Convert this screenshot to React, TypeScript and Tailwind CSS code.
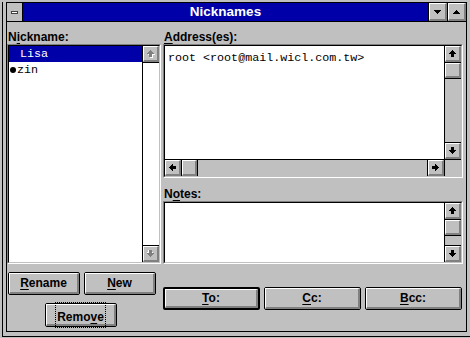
import React from "react";

const SANS = { fontFamily: '"Liberation Sans", Arial, sans-serif' };
const MONO = { fontFamily: '"Liberation Mono", "Courier New", monospace' };

type Dir = "up" | "down" | "left" | "right";

function StemArrow({ dir, disabled }: { dir: Dir; disabled?: boolean }) {
  const rects = [
    [3, 0, 1],
    [2, 1, 3],
    [1, 2, 5],
    [0, 3, 7],
    [2, 4, 3],
    [2, 5, 3],
    [2, 6, 3],
  ];
  const rot = dir === "up" ? 0 : dir === "down" ? 180 : dir === "left" ? 270 : 90;
  const draw = (fill: string, dx: number, dy: number) =>
    rects.map(([x, y, w], i) => (
      <rect key={fill + i} x={x + dx} y={y + dy} width={w} height={1} fill={fill} />
    ));
  return (
    <svg width="8" height="8" viewBox="0 0 8 8" shapeRendering="crispEdges">
      <g transform={`rotate(${rot} 3.5 3.5)`}>
        {disabled ? (
          <>
            {draw("#ffffff", 1, 1)}
            {draw("#808080", 0, 0)}
          </>
        ) : (
          draw("#000000", 0, 0)
        )}
      </g>
    </svg>
  );
}

function Tri({ dir }: { dir: "up" | "down" }) {
  const rows = [
    [3, 0, 1],
    [2, 1, 3],
    [1, 2, 5],
    [0, 3, 7],
  ];
  return (
    <svg width="7" height="4" viewBox="0 0 7 4" shapeRendering="crispEdges">
      <g transform={dir === "down" ? "rotate(180 3.5 2)" : undefined}>
        {rows.map(([x, y, w], i) => (
          <rect key={i} x={x} y={y} width={w} height={1} fill="#000" />
        ))}
      </g>
    </svg>
  );
}

function BevelBox({ className = "", children }: { className?: string; children?: React.ReactNode }) {
  return (
    <div
      className={
        "bg-[#c0c0c0] border-t border-l border-t-white border-l-white border-b-2 border-r-2 border-b-[#808080] border-r-[#808080] flex items-center justify-center " +
        className
      }
    >
      {children}
    </div>
  );
}

function VScroll({ disabled, thumb }: { disabled?: boolean; thumb?: boolean }) {
  return (
    <div className={"w-[17px] border-l border-black flex flex-col " + (disabled ? "bg-white" : "bg-[#c0c0c0]")}>
      <BevelBox className="h-[16px] w-[16px] shrink-0">
        <StemArrow dir="up" disabled={disabled} />
      </BevelBox>
      <div className="h-px bg-black shrink-0" />
      {thumb && (
        <>
          <BevelBox className="h-[15px] w-[16px] shrink-0" />
          <div className="h-px bg-black shrink-0" />
        </>
      )}
      <div className="flex-1" />
      <div className="h-px bg-black shrink-0" />
      <BevelBox className="h-[16px] w-[16px] shrink-0">
        <StemArrow dir="down" disabled={disabled} />
      </BevelBox>
    </div>
  );
}

function Sunken({ className = "", children }: { className?: string; children?: React.ReactNode }) {
  return (
    <div className={"border border-t-[#808080] border-l-[#808080] border-b-white border-r-white flex " + className}>
      <div className="flex-1 flex border border-t-black border-l-black border-b-[#c0c0c0] border-r-[#c0c0c0] bg-white min-h-0">
        {children}
      </div>
    </div>
  );
}

function Btn({
  label,
  u,
  w,
  h = "h-[23px]",
  def,
  focus,
}: {
  label: string;
  u: number;
  w: string;
  h?: string;
  def?: boolean;
  focus?: boolean;
}) {
  const text = (
    <span className="text-[12px] font-bold text-black leading-[14px]" style={SANS}>
      {label.slice(0, u)}
      <span className="underline underline-offset-2">{label[u]}</span>
      {label.slice(u + 1)}
    </span>
  );
  return (
    <div className={(def ? "border-2" : "border") + " border-black rounded-[2px] flex " + w + " " + h}>
      <div className="flex-1 flex items-center justify-center bg-[#c0c0c0] border-t border-l border-t-white border-l-white border-b-2 border-r-2 border-b-[#808080] border-r-[#808080]">
        {focus ? <div className="border border-dotted border-black px-[1px]">{text}</div> : text}
      </div>
    </div>
  );
}

function Label({ text, u, className = "" }: { text: string; u: number; className?: string }) {
  return (
    <div className={"h-[14px] text-[12px] font-bold leading-[14px] text-black pl-[1px] " + className} style={SANS}>
      {text.slice(0, u)}
      <span className="underline underline-offset-2">{text[u]}</span>
      {text.slice(u + 1)}
    </div>
  );
}

export default function App() {
  return (
    <div className="w-[470px] h-[338px] bg-[#c0c0c0] overflow-hidden pl-[2px] pt-[2px]">
      <div className="w-[470px] h-[335px] border-l border-b border-black pl-[3px] pb-[4px] flex flex-col">
        <div className="w-[461px] h-[330px] border border-black flex flex-col shrink-0">
          {/* Title bar */}
          <div className="h-[19px] border-b border-black flex shrink-0">
            <div className="w-[16px] border-r border-black bg-[#c0c0c0] flex items-center justify-center">
              <div className="w-[7px] h-[3px] bg-white border border-[#404040]" />
            </div>
            <div
              className="flex-1 bg-[#0000a8] text-white text-[13.5px] font-bold flex items-center justify-center leading-none"
              style={SANS}
            >
              Nicknames
            </div>
            <div className="w-[19px] border-l border-black flex">
              <BevelBox className="flex-1">
                <Tri dir="down" />
              </BevelBox>
            </div>
            <div className="w-[19px] border-l border-black flex">
              <BevelBox className="flex-1">
                <Tri dir="up" />
              </BevelBox>
            </div>
          </div>
          {/* Client */}
          <div className="flex-1 flex gap-[2px] pt-[8px]">
            {/* Left column */}
            <div className="w-[154px] flex flex-col">
              <Label text="Nickname:" u={1} />
              <Sunken className="h-[220px]">
                <div className="flex-1 flex flex-col text-[11.7px] leading-[16px]" style={MONO}>
                  <div className="h-[16px] bg-[#0000a8] text-white pl-[11px]">Lisa</div>
                  <div className="h-[16px] text-black flex items-center">
                    <span className="inline-block w-[6px] h-[6px] rounded-full bg-black mr-[1px] ml-[1px]" />
                    zin
                  </div>
                </div>
                <VScroll disabled />
              </Sunken>
              <div className="flex gap-[4px] pl-[1px] mt-[8px]">
                <Btn label="Rename" u={0} w="w-[72px]" />
                <Btn label="New" u={0} w="w-[72px]" />
              </div>
              <div className="pl-[38px] mt-[8px]">
                <Btn label="Remove" u={4} w="w-[72px]" h="h-[24px]" focus />
              </div>
            </div>
            {/* Right column */}
            <div className="w-[300px] flex flex-col">
              <Label text="Address(es):" u={0} />
              <Sunken className="h-[134px]">
                <div className="flex-1 flex flex-col">
                  <div className="flex-1 flex">
                    <div className="flex-1 text-[11.7px] text-black pl-[3px] pt-[4px] leading-[16px]" style={MONO}>
                      root &lt;root@mail.wicl.com.tw&gt;
                    </div>
                    <VScroll thumb />
                  </div>
                  <div className="h-[17px] border-t border-black flex bg-[#c0c0c0]">
                    <BevelBox className="w-[16px] h-[16px]">
                      <StemArrow dir="left" />
                    </BevelBox>
                    <div className="w-px bg-black" />
                    <BevelBox className="w-[15px] h-[16px]" />
                    <div className="w-px bg-black" />
                    <div className="flex-1" />
                    <div className="w-px bg-black" />
                    <BevelBox className="w-[16px] h-[16px]">
                      <StemArrow dir="right" />
                    </BevelBox>
                    <div className="w-px bg-black" />
                    <div className="w-[16px]" />
                  </div>
                </div>
              </Sunken>
              <Label text="Notes:" u={1} className="mt-[9px]" />
              <Sunken className="h-[63px]">
                <div className="flex-1" />
                <VScroll thumb />
              </Sunken>
              <div className="flex gap-[4px] mt-[23px]">
                <Btn label="To:" u={0} w="w-[97px]" def />
                <Btn label="Cc:" u={0} w="w-[97px]" />
                <Btn label="Bcc:" u={0} w="w-[97px]" />
              </div>
            </div>
          </div>
        </div>
        {/* bottom sizing-frame corner marks */}
        <div className="flex-1 flex">
          <div className="w-[16px]" />
          <div className="w-px bg-black" />
          <div className="w-[424px]" />
          <div className="w-px bg-black" />
        </div>
      </div>
    </div>
  );
}
